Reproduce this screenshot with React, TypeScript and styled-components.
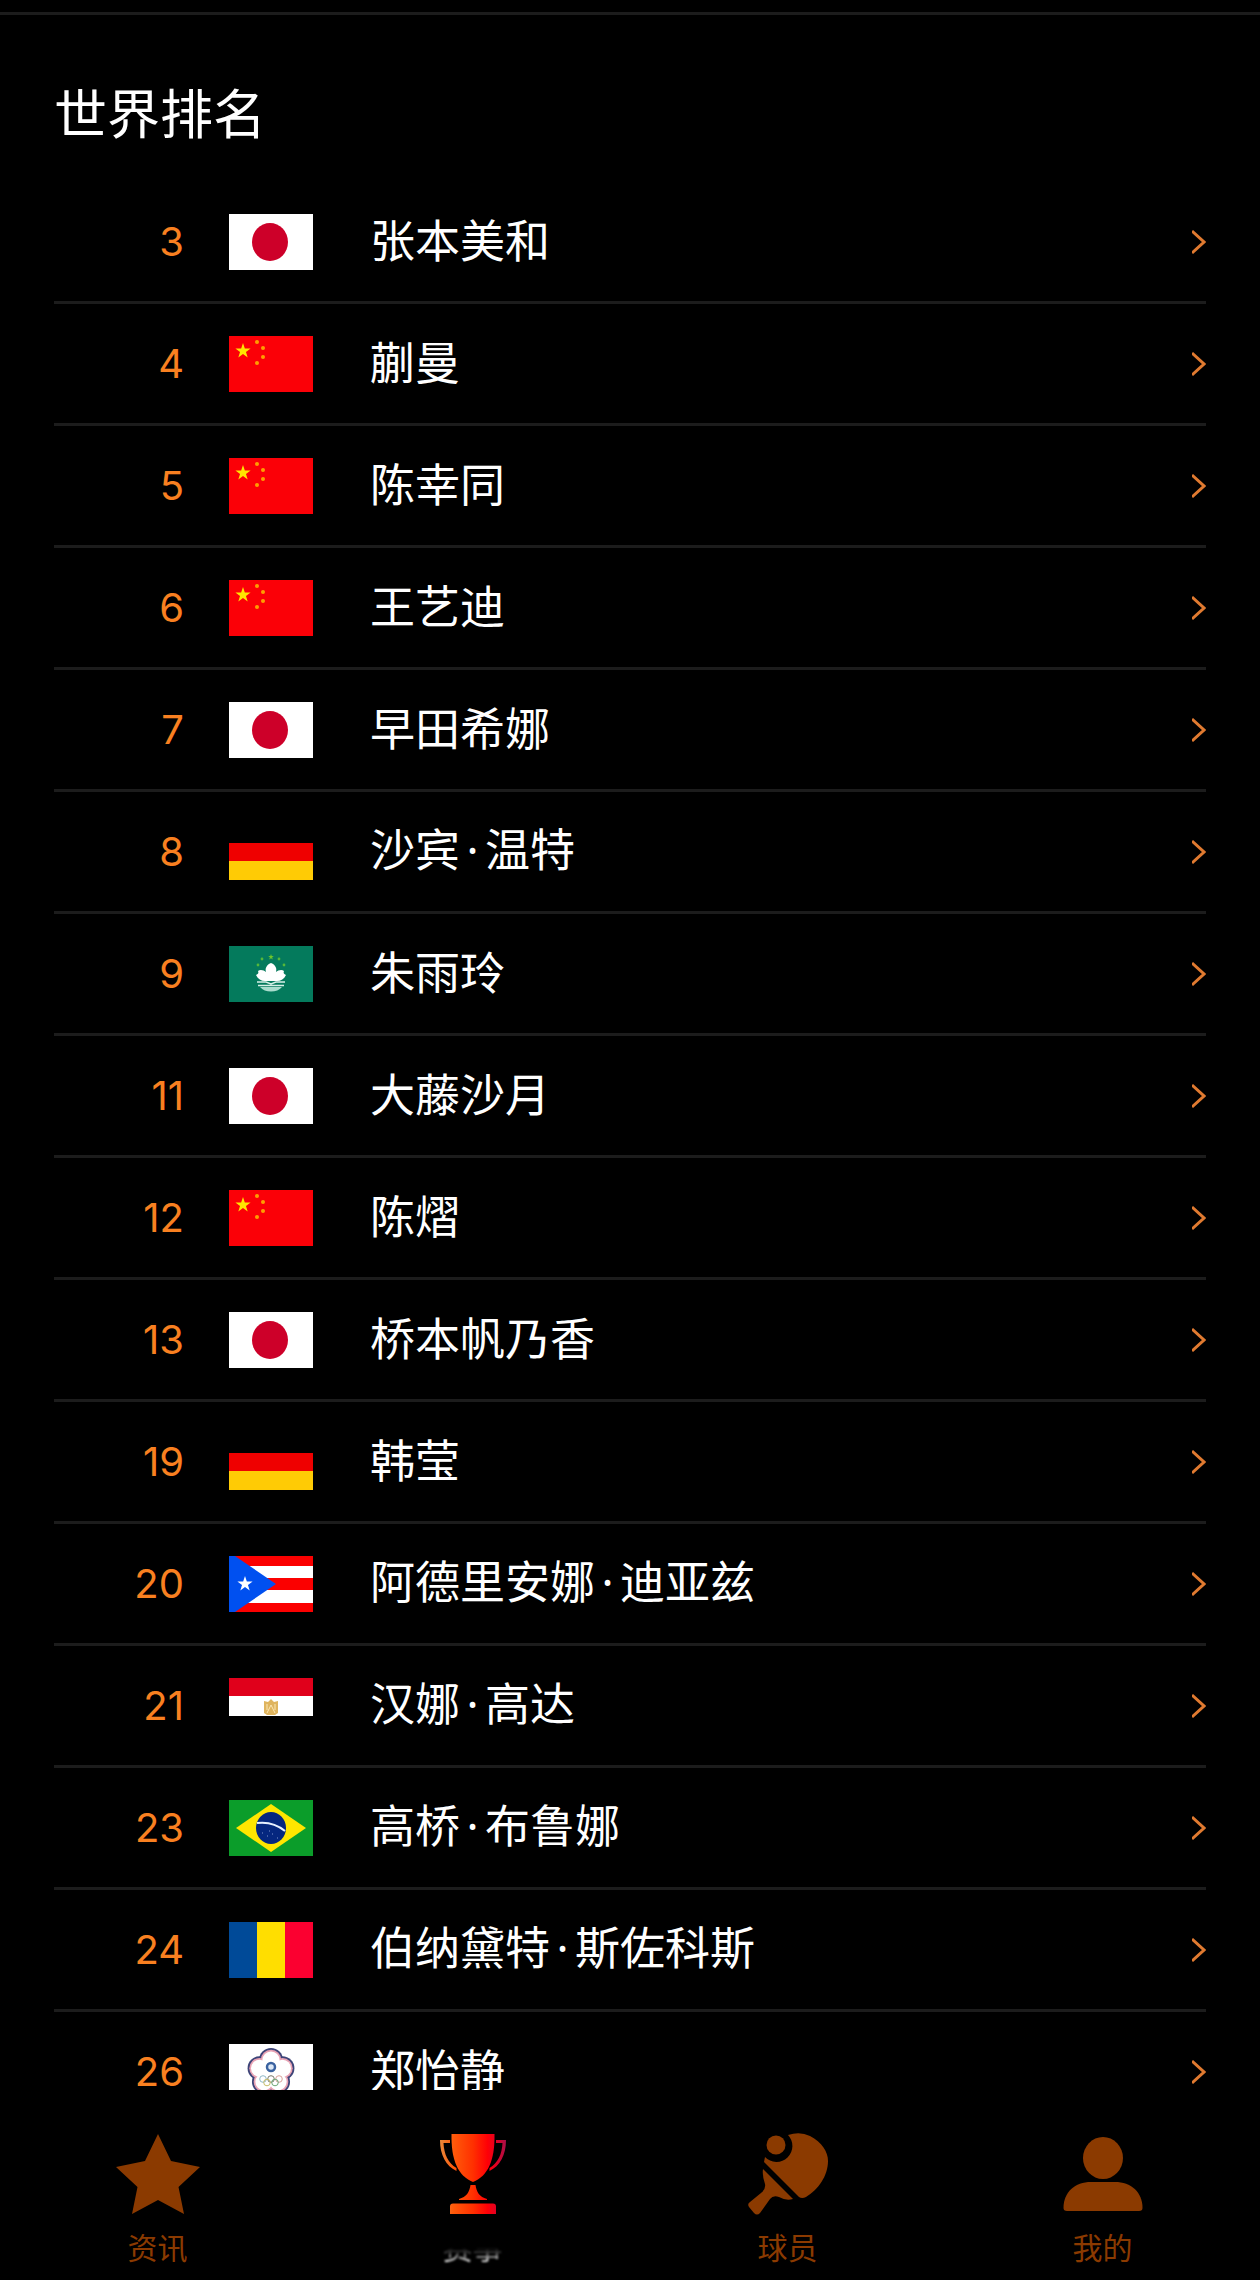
import React from 'react';
import styled, { createGlobalStyle } from 'styled-components';

const Global = createGlobalStyle`
  * { box-sizing: border-box; }
  body { margin: 0; background: #000; font-family: "Noto Sans CJK SC", sans-serif; }
`;

const Screen = styled.div`
  height: 100vh;
  display: flex;
  flex-direction: column;
  background: #000;
  color: #fff;
`;

const Main = styled.main`
  flex: 1;
  min-height: 0;
  overflow: hidden;
  padding: 12px 54px 0;
`;

const TopRule = styled.hr`
  margin: 0 -54px;
  border: 0;
  height: 3px;
  background: #1c1c1c;
`;

const Title = styled.h1`
  margin: 56px 0 31px;
  font-size: 53px;
  line-height: 80px;
  font-weight: 400;
`;

const List = styled.ul`
  margin: 0;
  padding: 0;
  list-style: none;
`;

const Item = styled.li`
  border-bottom: 3px solid #1c1c1c;
`;

const RowLink = styled.a`
  display: grid;
  grid-template-columns: 130px 84px 1fr 14px;
  align-items: center;
  height: 119px;
  color: inherit;
  text-decoration: none;
`;

const Rank = styled.span`
  color: #f98020;
  font-family: Inter, sans-serif;
  font-size: 40px;
  line-height: 48px;
  text-align: right;
`;

const FlagBox = styled.svg`
  display: block;
  width: 84px;
  height: 56px;
  margin-left: 45px;
`;

const Name = styled.span`
  padding: 0 0 6px 102px;
  font-size: 45px;
  line-height: 48px;
  white-space: nowrap;
`;

const Dot = styled.span`
  display: inline-block;
  width: 25px;
  font-family: "Noto Sans", sans-serif;
  text-align: center;
`;

const Chevron = styled.svg`
  display: block;
  width: 14px;
  height: 26px;
`;

const Nav = styled.nav`
  display: grid;
  grid-template-columns: repeat(4, 1fr);
  height: 190px;
`;

const Tab = styled.button`
  display: flex;
  flex-direction: column;
  align-items: center;
  gap: 6px;
  padding: 40px 0 0;
  border: 0;
  background: none;
  color: #8b3a00;
  font-family: inherit;
  font-size: 30px;
  line-height: 44px;
`;

const TabIcon = styled.svg`
  display: block;
  width: 84px;
  height: 88px;
`;

const FadedLabel = styled.span`
  color: transparent;
  background: linear-gradient(to bottom, #000 54%, #444 66%, #eee 84%);
  background-clip: text;
  -webkit-background-clip: text;
  filter: blur(1px);
`;

type Code = 'jp' | 'cn' | 'de' | 'mo' | 'pr' | 'eg' | 'br' | 'ro' | 'tpe';

const star = (cx: number, cy: number, r: number) =>
  Array.from({ length: 10 }, (_, i) => {
    const a = (Math.PI / 5) * i - Math.PI / 2;
    const q = i % 2 ? r * 0.39 : r;
    return `${(cx + q * Math.cos(a)).toFixed(2)},${(cy + q * Math.sin(a)).toFixed(2)}`;
  }).join(' ');

function Petals({ r, fill }: { r: number; fill: string }) {
  return (
    <g fill={fill}>
      {Array.from({ length: 5 }, (_, i) => {
        const a = (Math.PI * 2 * i) / 5 - Math.PI / 2;
        return <circle key={i} cx={42 + 12 * Math.cos(a)} cy={28 + 12 * Math.sin(a)} r={r} />;
      })}
    </g>
  );
}

const flags: Record<Code, React.ReactNode> = {
  jp: (
    <>
      <rect width="84" height="56" fill="#fff" />
      <ellipse cx="41" cy="28" rx="18" ry="19" fill="#cd0029" />
    </>
  ),
  cn: (
    <>
      <rect width="84" height="56" fill="#fb0007" />
      <polygon points={star(14, 15, 8)} fill="#ffe600" />
      {[[28, 6], [34, 12], [34, 21], [28, 27]].map(([x, y]) => (
        <circle key={y} cx={x} cy={y} r="2" fill="#ff9d00" />
      ))}
    </>
  ),
  de: (
    <>
      <rect y="19" width="84" height="19" fill="#ef0000" />
      <rect y="37" width="84" height="19" fill="#ffcb05" />
    </>
  ),
  mo: (
    <>
      <rect width="84" height="56" fill="#047a5c" />
      <polygon points={star(42, 11, 3)} fill="#6cc52c" />
      {[[33, 13], [50, 13], [29, 19], [55, 19]].map(([x, y]) => (
        <circle key={x} cx={x} cy={y} r="1.4" fill="#55b83a" />
      ))}
      <path d="M42 17c5 2 6 6 5 9 2-2 6-3 8-1-1 2 0 3 2 4-2 4-5 6-9 6H36c-4 0-7-2-9-6 2-1 3-2 2-4 2-2 6-1 8 1-1-3 0-7 5-9z" fill="#fff" />
      <path d="M28 36h9l5 2 5-2h9M29 39.5h26" stroke="#d6efe7" strokeWidth="1.5" fill="none" />
      <path d="M31 41h22q-4 4.5-11 4.5T31 41z" fill="#a9dccd" />
    </>
  ),
  pr: (
    <>
      <rect width="84" height="56" fill="#fb0000" />
      <path d="M0 10h84v12H0zM0 34h84v13H0z" fill="#fff" />
      <path d="M0 0h6l41 28L6 56H0z" fill="#0050f0" />
      <polygon points={star(16, 28, 8)} fill="#fff" />
    </>
  ),
  eg: (
    <>
      <rect width="84" height="18" fill="#e0001b" />
      <rect y="18" width="84" height="20" fill="#fff" />
      <path d="M35 23l4 1 3-3 3 3 4-1v12l-3 2h-8l-3-2z" fill="#dfb45e" />
      <path d="M38 35l4-8 4 8M38 26v6M46 26v6" stroke="#fbe7b4" strokeWidth="1" fill="none" />
    </>
  ),
  br: (
    <>
      <rect width="84" height="56" fill="#0b9d2a" />
      <path d="M42 4l35 24-35 24L7 28z" fill="#ffe600" />
      <ellipse cx="42" cy="28" rx="15" ry="16" fill="#05277f" />
      <path d="M28 23q16-2 28 8" stroke="#e6f0ff" strokeWidth="2" fill="none" />
      <path d="M33 33h1M38 36h1M43 34h1M48 38h1M40 31h1" stroke="#7f94cc" />
    </>
  ),
  ro: (
    <>
      <rect width="28" height="56" fill="#004a98" />
      <rect x="28" width="28" height="56" fill="#ffde00" />
      <rect x="56" width="28" height="56" fill="#fb0030" />
    </>
  ),
  tpe: (
    <>
      <rect width="84" height="56" fill="#fff" />
      <Petals r={12} fill="#3d4478" />
      <Petals r={10.3} fill="#e9a3b4" />
      <Petals r={8.6} fill="#fff" />
      <circle cx="42" cy="28" r="13" fill="#fff" />
      <circle cx="42" cy="23" r="4" fill="#dbe7f5" stroke="#3a62a0" strokeWidth="2.5" />
      <g fill="none" strokeWidth="1">
        <circle cx="34" cy="35" r="3.3" stroke="#8fb9c9" />
        <circle cx="42" cy="35" r="3.3" stroke="#7a7a6c" />
        <circle cx="50" cy="35" r="3.3" stroke="#d9a29a" />
        <circle cx="38" cy="38.5" r="3.3" stroke="#c9bd6a" />
        <circle cx="46" cy="38.5" r="3.3" stroke="#6fa877" />
      </g>
    </>
  ),
};

const players: { rank: number; code: Code; name: string }[] = [
  { rank: 3, code: 'jp', name: '张本美和' },
  { rank: 4, code: 'cn', name: '蒯曼' },
  { rank: 5, code: 'cn', name: '陈幸同' },
  { rank: 6, code: 'cn', name: '王艺迪' },
  { rank: 7, code: 'jp', name: '早田希娜' },
  { rank: 8, code: 'de', name: '沙宾·温特' },
  { rank: 9, code: 'mo', name: '朱雨玲' },
  { rank: 11, code: 'jp', name: '大藤沙月' },
  { rank: 12, code: 'cn', name: '陈熠' },
  { rank: 13, code: 'jp', name: '桥本帆乃香' },
  { rank: 19, code: 'de', name: '韩莹' },
  { rank: 20, code: 'pr', name: '阿德里安娜·迪亚兹' },
  { rank: 21, code: 'eg', name: '汉娜·高达' },
  { rank: 23, code: 'br', name: '高桥·布鲁娜' },
  { rank: 24, code: 'ro', name: '伯纳黛特·斯佐科斯' },
  { rank: 26, code: 'tpe', name: '郑怡静' },
];

function PlayerName({ name }: { name: string }) {
  const [first, last] = name.split('·');
  return <Name>{first}{last && <><Dot>·</Dot>{last}</>}</Name>;
}

function TrophyIcon() {
  return (
    <TabIcon viewBox="0 0 84 88" aria-hidden="true">
      <defs>
        <linearGradient id="trophy" gradientUnits="userSpaceOnUse" x1="9" y1="0" x2="75" y2="0">
          <stop offset="0" stopColor="#e8893c" />
          <stop offset="0.2" stopColor="#ff5a0a" />
          <stop offset="0.5" stopColor="#ff3000" />
          <stop offset="0.72" stopColor="#ff0006" />
          <stop offset="0.86" stopColor="#e00024" />
          <stop offset="1" stopColor="#a81048" />
        </linearGradient>
      </defs>
      <g fill="url(#trophy)">
        <path d="M20.500 4h43C64 30 57 46 42 52 27 46 20 30 20.500 4z" />
        <path d="M19 10H9c0 15 6 26 16.500 31v-3C17 33 13 24 12.500 13H19z" />
        <path d="M65 10h10c0 15-6 26-16.500 31v-3C67 33 71 24 71.500 13H65z" />
        <path d="M39.500 55h5c1 7 4 12 11.500 14v1H28v-1c7.500-2 10.500-7 11.500-14z" />
        <path d="M22 73.500h40q3 0 3 3V84H19v-7.500q0-3 3-3z" />
      </g>
    </TabIcon>
  );
}

export default function App() {
  return (
    <Screen>
      <Global />
      <Main>
        <TopRule />
        <Title>世界排名</Title>
        <List>
          {players.map((p) => (
            <Item key={p.rank}>
              <RowLink href="#">
                <Rank>{p.rank}</Rank>
                <FlagBox viewBox="0 0 84 56" aria-hidden="true">{flags[p.code]}</FlagBox>
                <PlayerName name={p.name} />
                <Chevron viewBox="0 0 14 26" aria-hidden="true">
                  <path d="M0 2L12 13L0 24" fill="none" stroke="#e07a30" strokeWidth="3" />
                </Chevron>
              </RowLink>
            </Item>
          ))}
        </List>
      </Main>
      <Nav>
        <Tab>
          <TabIcon viewBox="0 0 84 88" fill="currentColor" aria-hidden="true">
            <path d="M42 4l13 27 29 6-21.500 20L68 84 42 70 16 84l5.500-27L0 37l29-6z" />
          </TabIcon>
          资讯
        </Tab>
        <Tab aria-current="page">
          <TrophyIcon />
          <FadedLabel>赛事</FadedLabel>
        </Tab>
        <Tab>
          <TabIcon viewBox="0 0 84 88" fill="currentColor" aria-hidden="true">
            <circle cx="30" cy="15" r="9.500" />
            <path d="M42 5Q54 1 64 6c12 6 18 16 18 25 0 15-10 29-22 36q-4 2-7 0L18 32l1-5A15.500 15.500 0 0 0 42 5z" />
            <path d="M17 39l30 30q-7 2-14-2-6-2-9 2L14 83q-3 3-6 0l-5-6q-2-3 1-5l11-9q5-4 4-9-3-9-2-15z" />
          </TabIcon>
          球员
        </Tab>
        <Tab>
          <TabIcon viewBox="0 0 84 88" fill="currentColor" aria-hidden="true">
            <ellipse cx="42" cy="28" rx="20" ry="21" />
            <path d="M2.500 78C2.500 62 14 52 30 52h24c16 0 27.500 10 27.500 26q0 3-3.500 3H6q-3.500 0-3.500-3z" />
          </TabIcon>
          我的
        </Tab>
      </Nav>
    </Screen>
  );
}
